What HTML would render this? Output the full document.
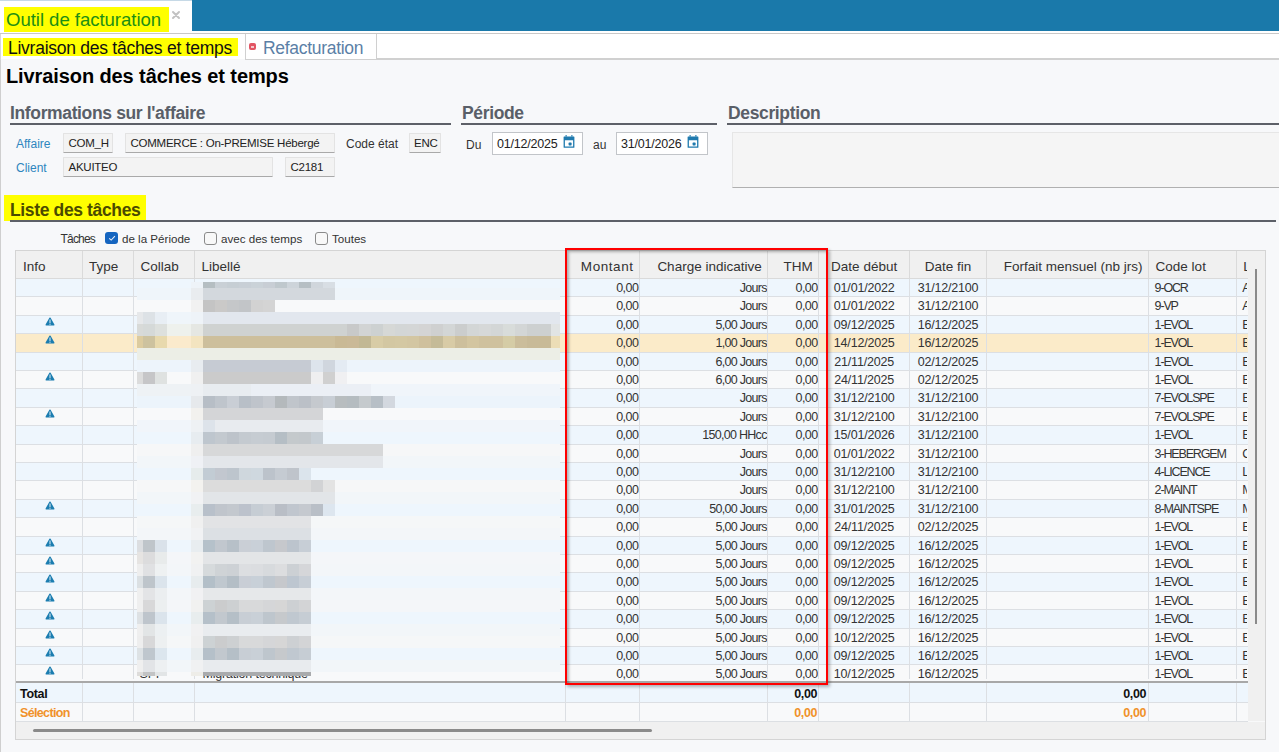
<!DOCTYPE html><html><head><meta charset="utf-8"><style>
*{box-sizing:border-box;margin:0;padding:0}
html,body{width:1279px;height:752px;overflow:hidden}
body{background:#f7f8fa;font-family:"Liberation Sans",sans-serif;color:#333;position:relative}
.a{position:absolute;white-space:nowrap}
.hl{background:#ffff00}
.sec{font-weight:bold;color:#5a5f68;font-size:17.5px;letter-spacing:-0.36px;line-height:20px}
.uline{position:absolute;height:2px;background:#5d6068}
.lbl{font-size:12px;color:#2e86be;line-height:16px}
.fld{position:absolute;background:#f3f3f3;border:1px solid #e3e3e3;border-bottom:1px solid #a9a9a9;border-radius:1px;font-size:11.5px;letter-spacing:-0.25px;color:#222;padding-left:4.5px;line-height:18px}
.date{position:absolute;background:#fff;border:1px solid #c2c5c9;font-size:12.5px;letter-spacing:-0.2px;color:#222;padding-left:4px;line-height:23px}
.txt{font-size:12px;color:#333;line-height:16px}
.cb{position:absolute;width:13px;height:13px;border:1px solid #8a8a8a;border-radius:3px;background:#f8f8f8}
.hdr{position:absolute;font-size:13.5px;color:#333;line-height:28px;white-space:nowrap;overflow:hidden}
.cell{position:absolute;font-size:12.5px;letter-spacing:-0.2px;color:#333;white-space:nowrap;overflow:hidden;line-height:18px}
</style></head><body>
<div class="a" style="left:0;top:0;width:1279px;height:33px;background:#fff"></div>
<div class="a" style="left:0;top:0;width:1279px;height:1px;background:#c6d9e6"></div>
<div class="a" style="left:192px;top:0;width:1087px;height:31px;background:#1a79aa"></div>
<div class="a hl" style="left:4px;top:7px;width:165px;height:25px"></div>
<div class="a" style="left:6px;top:7px;font-size:18.6px;line-height:25px;color:#1d8f14;letter-spacing:-0.05px">Outil de facturation</div>
<div class="a" style="left:171px;top:9.5px"><svg style="display:block" width="10" height="10" viewBox="0 0 10 10"><path d="M2 2 L8 8 M8 2 L2 8" stroke="#c2c2c2" stroke-width="2" stroke-linecap="round"/></svg></div>
<div class="a" style="left:0;top:33px;width:1279px;height:1px;background:#c8c8c8"></div>
<div class="a" style="left:0;top:34px;width:1279px;height:25px;background:#fff"></div>
<div class="a" style="left:245px;top:58px;width:1034px;height:1.5px;background:#d0d0d0"></div>
<div class="a" style="left:0;top:34px;width:1px;height:26px;background:#d8d8d8"></div>
<div class="a" style="left:245px;top:34px;width:132px;height:25.5px;border-right:1px solid #d0d0d0;border-left:1px solid #d0d0d0;border-bottom:1.5px solid #d0d0d0;background:#fff"></div>
<div class="a hl" style="left:3px;top:38px;width:235px;height:18px"></div>
<div class="a" style="left:8px;top:37px;font-size:17.5px;letter-spacing:-0.26px;line-height:22px;color:#111">Livraison des tâches et temps</div>
<div class="a" style="left:249px;top:43px;width:6.5px;height:7px;border-radius:2px;background:#e25564"></div>
<div class="a" style="left:250.5px;top:45.5px;width:3.5px;height:2px;background:#f4c8cc"></div>
<div class="a" style="left:263px;top:37px;font-size:17.5px;letter-spacing:-0.3px;line-height:22px;color:#5b7fa6">Refacturation</div>
<div class="a" style="left:0;top:60px;width:1px;height:692px;background:#cfcfcf"></div>
<div class="a" style="left:6px;top:64px;font-size:20px;line-height:24px;font-weight:bold;color:#000;letter-spacing:-0.1px">Livraison des tâches et temps</div>
<div class="a sec" style="left:10px;top:103px">Informations sur l'affaire</div>
<div class="uline" style="left:10px;top:122.6px;width:441px;height:2px"></div>
<div class="a sec" style="left:462px;top:103px">Période</div>
<div class="uline" style="left:461px;top:122.6px;width:256px;height:2px"></div>
<div class="a sec" style="left:728px;top:103px">Description</div>
<div class="uline" style="left:727px;top:122.6px;width:552px;height:2px"></div>
<div class="a lbl" style="left:16px;top:135.5px">Affaire</div>
<div class="a lbl" style="left:16px;top:159.5px">Client</div>
<div class="fld" style="left:63px;top:133px;width:50px;height:20px">COM_H</div>
<div class="fld" style="left:125px;top:133px;width:210px;height:20px">COMMERCE : On-PREMISE Hébergé</div>
<div class="fld" style="left:63px;top:157px;width:210px;height:20px">AKUITEO</div>
<div class="fld" style="left:285px;top:157px;width:50px;height:20px">C2181</div>
<div class="a txt" style="left:346px;top:136px">Code état</div>
<div class="fld" style="left:409px;top:133px;width:32px;height:20px;padding-left:4px">ENC</div>
<div class="a txt" style="left:466px;top:137px">Du</div>
<div class="date" style="left:492px;top:132px;width:91px;height:23px">01/12/2025</div>
<div class="a" style="left:563px;top:135px"><svg style="display:block" width="12" height="13" viewBox="0 0 12 13"><path d="M2.4 0.3 H3.9 V1.6 H2.4 Z M8.1 0.3 H9.6 V1.6 H8.1 Z" fill="#1f7aae"/><path d="M1.2 1.5 H10.8 Q11.4 1.5 11.4 2.1 V12.2 Q11.4 12.8 10.8 12.8 H1.2 Q0.6 12.8 0.6 12.2 V2.1 Q0.6 1.5 1.2 1.5 Z M1.9 5.3 V11.5 H10.1 V5.3 Z" fill="#1f7aae" fill-rule="evenodd"/><rect x="5.6" y="7.6" width="3" height="2.8" rx="0.6" fill="#1f7aae"/></svg></div>
<div class="a txt" style="left:593px;top:137px">au</div>
<div class="date" style="left:616px;top:132px;width:92px;height:23px">31/01/2026</div>
<div class="a" style="left:687px;top:135px"><svg style="display:block" width="12" height="13" viewBox="0 0 12 13"><path d="M2.4 0.3 H3.9 V1.6 H2.4 Z M8.1 0.3 H9.6 V1.6 H8.1 Z" fill="#1f7aae"/><path d="M1.2 1.5 H10.8 Q11.4 1.5 11.4 2.1 V12.2 Q11.4 12.8 10.8 12.8 H1.2 Q0.6 12.8 0.6 12.2 V2.1 Q0.6 1.5 1.2 1.5 Z M1.9 5.3 V11.5 H10.1 V5.3 Z" fill="#1f7aae" fill-rule="evenodd"/><rect x="5.6" y="7.6" width="3" height="2.8" rx="0.6" fill="#1f7aae"/></svg></div>
<div class="a" style="left:732px;top:132px;width:547px;height:56px;background:#f5f5f5;border-top:1px solid #e6e6e6;border-left:1px solid #e6e6e6;border-bottom:1px solid #b0b0b0"></div>
<div class="a hl" style="left:4px;top:195px;width:142px;height:26px"></div>
<div class="a sec" style="left:10px;top:200px;color:#4b4b00">Liste des tâches</div>
<div class="uline" style="left:10px;top:220px;width:1266px"></div>
<div class="a txt" style="left:60.5px;top:231px;letter-spacing:-0.8px">Tâches</div>
<div class="a" style="left:105px;top:231.5px;width:12.5px;height:12.5px;border-radius:3px;background:#1565c0"></div>
<div class="a" style="left:106.5px;top:233px"><svg style="display:block" width="10" height="10" viewBox="0 0 10 10"><path d="M2.2 5.3 L4.2 7.1 L7.9 3.2" stroke="#e6eef8" stroke-width="1.1" fill="none"/></svg></div>
<div class="a txt" style="left:122px;top:231px;font-size:11.6px">de la Période</div>
<div class="cb" style="left:204px;top:231.5px"></div>
<div class="a txt" style="left:221px;top:231px;font-size:11.6px">avec des temps</div>
<div class="cb" style="left:315px;top:231.5px"></div>
<div class="a txt" style="left:332px;top:231px;font-size:11.6px">Toutes</div>
<div class="a" style="left:15px;top:250px;width:1251px;height:490px;border:1px solid #d4d4d4;background:#f8f9fa"></div>
<div class="a" style="left:16px;top:251px;width:1232px;height:28px;background:#f0f0f0;border-bottom:1px solid #dadada"></div>
<div class="hdr" style="left:16.0px;top:252.8px;width:66.0px;padding-left:7px;text-align:left">Info</div>
<div class="hdr" style="left:82.0px;top:252.8px;width:51.5px;padding-left:7px;text-align:left">Type</div>
<div class="a" style="left:81.5px;top:251px;width:1px;height:27px;background:#dadada"></div>
<div class="hdr" style="left:133.5px;top:252.8px;width:61.0px;padding-left:7px;text-align:left">Collab</div>
<div class="a" style="left:133.0px;top:251px;width:1px;height:27px;background:#dadada"></div>
<div class="hdr" style="left:194.5px;top:252.8px;width:370.5px;padding-left:7px;text-align:left">Libellé</div>
<div class="a" style="left:194.0px;top:251px;width:1px;height:27px;background:#dadada"></div>
<div class="hdr" style="left:565.0px;top:252.8px;width:74.5px;padding-right:6px;text-align:right;letter-spacing:0.55px">Montant</div>
<div class="a" style="left:564.5px;top:251px;width:1px;height:27px;background:#dadada"></div>
<div class="hdr" style="left:639.5px;top:252.8px;width:128.2px;padding-right:6px;text-align:right">Charge indicative</div>
<div class="a" style="left:639.0px;top:251px;width:1px;height:27px;background:#dadada"></div>
<div class="hdr" style="left:767.7px;top:252.8px;width:51.1px;padding-right:6px;text-align:right">THM</div>
<div class="a" style="left:767.2px;top:251px;width:1px;height:27px;background:#dadada"></div>
<div class="hdr" style="left:818.8px;top:252.8px;width:90.7px;text-align:center">Date début</div>
<div class="a" style="left:818.3px;top:251px;width:1px;height:27px;background:#dadada"></div>
<div class="hdr" style="left:909.5px;top:252.8px;width:76.9px;text-align:center">Date fin</div>
<div class="a" style="left:909.0px;top:251px;width:1px;height:27px;background:#dadada"></div>
<div class="hdr" style="left:986.4px;top:252.8px;width:162.2px;padding-right:6px;text-align:right">Forfait mensuel (nb jrs)</div>
<div class="a" style="left:985.9px;top:251px;width:1px;height:27px;background:#dadada"></div>
<div class="hdr" style="left:1148.6px;top:252.8px;width:87.7px;padding-left:7px;text-align:left">Code lot</div>
<div class="a" style="left:1148.1px;top:251px;width:1px;height:27px;background:#dadada"></div>
<div class="hdr" style="left:1236.3px;top:252.8px;width:11.2px;padding-left:7px;text-align:left">L</div>
<div class="a" style="left:1235.8px;top:251px;width:1px;height:27px;background:#dadada"></div>
<div class="a" style="left:16px;top:279px;width:1232px;height:402px;overflow:hidden;background:#fff">
<div class="a" style="left:0;top:0.0px;width:1232px;height:18.4px;background:#eef6fd;border-bottom:1px solid #dcdfe3"></div>
<div class="cell" style="left:549.0px;top:0.0px;width:74.5px;text-align:right;padding-right:1px;letter-spacing:-0.5px">0,00</div>
<div class="cell" style="left:623.5px;top:0.0px;width:128.2px;text-align:right;padding-right:1px;letter-spacing:-0.72px">Jours</div>
<div class="cell" style="left:751.7px;top:0.0px;width:51.1px;text-align:right;padding-right:1px;letter-spacing:-0.5px">0,00</div>
<div class="cell" style="left:802.8px;top:0.0px;width:90.7px;text-align:center">01/01/2022</div>
<div class="cell" style="left:893.5px;top:0.0px;width:76.9px;text-align:center">31/12/2100</div>
<div class="cell" style="left:1132.6px;top:0.0px;width:87.7px;padding-left:6px;letter-spacing:-1.15px">9-OCR</div>
<div class="cell" style="left:1220.3px;top:0.0px;width:53.7px;padding-left:6px;width:11px">A</div>
<div class="a" style="left:0;top:18.4px;width:1232px;height:18.4px;background:#f8f9fa;border-bottom:1px solid #dcdfe3"></div>
<div class="cell" style="left:549.0px;top:18.4px;width:74.5px;text-align:right;padding-right:1px;letter-spacing:-0.5px">0,00</div>
<div class="cell" style="left:623.5px;top:18.4px;width:128.2px;text-align:right;padding-right:1px;letter-spacing:-0.72px">Jours</div>
<div class="cell" style="left:751.7px;top:18.4px;width:51.1px;text-align:right;padding-right:1px;letter-spacing:-0.5px">0,00</div>
<div class="cell" style="left:802.8px;top:18.4px;width:90.7px;text-align:center">01/01/2022</div>
<div class="cell" style="left:893.5px;top:18.4px;width:76.9px;text-align:center">31/12/2100</div>
<div class="cell" style="left:1132.6px;top:18.4px;width:87.7px;padding-left:6px;letter-spacing:-1.15px">9-VP</div>
<div class="cell" style="left:1220.3px;top:18.4px;width:53.7px;padding-left:6px;width:11px">A</div>
<div class="a" style="left:0;top:36.8px;width:1232px;height:18.4px;background:#eef6fd;border-bottom:1px solid #dcdfe3"></div>
<div class="a" style="left:29px;top:37.7px"><svg style="display:block" width="10" height="9" viewBox="0 0 10 9"><path d="M5 0.4 Q5.35 0.4 5.6 0.85 L9.4 7.5 Q9.8 8.4 8.9 8.4 L1.1 8.4 Q0.2 8.4 0.6 7.5 L4.4 0.85 Q4.65 0.4 5 0.4 Z" fill="#1b7db0"/><rect x="4.5" y="2.5" width="1" height="3.7" fill="#e6f0f6"/><rect x="4.5" y="6.8" width="1" height="1" fill="#e6f0f6"/></svg></div>
<div class="cell" style="left:549.0px;top:36.8px;width:74.5px;text-align:right;padding-right:1px;letter-spacing:-0.5px">0,00</div>
<div class="cell" style="left:623.5px;top:36.8px;width:128.2px;text-align:right;padding-right:1px;letter-spacing:-0.72px">5,00 Jours</div>
<div class="cell" style="left:751.7px;top:36.8px;width:51.1px;text-align:right;padding-right:1px;letter-spacing:-0.5px">0,00</div>
<div class="cell" style="left:802.8px;top:36.8px;width:90.7px;text-align:center">09/12/2025</div>
<div class="cell" style="left:893.5px;top:36.8px;width:76.9px;text-align:center">16/12/2025</div>
<div class="cell" style="left:1132.6px;top:36.8px;width:87.7px;padding-left:6px;letter-spacing:-1.15px">1-EVOL</div>
<div class="cell" style="left:1220.3px;top:36.8px;width:53.7px;padding-left:6px;width:11px">E</div>
<div class="a" style="left:0;top:55.2px;width:1232px;height:18.4px;background:#fbebc9;border-bottom:1px solid #dcdfe3"></div>
<div class="a" style="left:29px;top:56.1px"><svg style="display:block" width="10" height="9" viewBox="0 0 10 9"><path d="M5 0.4 Q5.35 0.4 5.6 0.85 L9.4 7.5 Q9.8 8.4 8.9 8.4 L1.1 8.4 Q0.2 8.4 0.6 7.5 L4.4 0.85 Q4.65 0.4 5 0.4 Z" fill="#1b7db0"/><rect x="4.5" y="2.5" width="1" height="3.7" fill="#e6f0f6"/><rect x="4.5" y="6.8" width="1" height="1" fill="#e6f0f6"/></svg></div>
<div class="cell" style="left:549.0px;top:55.2px;width:74.5px;text-align:right;padding-right:1px;letter-spacing:-0.5px">0,00</div>
<div class="cell" style="left:623.5px;top:55.2px;width:128.2px;text-align:right;padding-right:1px;letter-spacing:-0.72px">1,00 Jours</div>
<div class="cell" style="left:751.7px;top:55.2px;width:51.1px;text-align:right;padding-right:1px;letter-spacing:-0.5px">0,00</div>
<div class="cell" style="left:802.8px;top:55.2px;width:90.7px;text-align:center">14/12/2025</div>
<div class="cell" style="left:893.5px;top:55.2px;width:76.9px;text-align:center">16/12/2025</div>
<div class="cell" style="left:1132.6px;top:55.2px;width:87.7px;padding-left:6px;letter-spacing:-1.15px">1-EVOL</div>
<div class="cell" style="left:1220.3px;top:55.2px;width:53.7px;padding-left:6px;width:11px">E</div>
<div class="a" style="left:0;top:73.6px;width:1232px;height:18.4px;background:#eef6fd;border-bottom:1px solid #dcdfe3"></div>
<div class="cell" style="left:549.0px;top:73.6px;width:74.5px;text-align:right;padding-right:1px;letter-spacing:-0.5px">0,00</div>
<div class="cell" style="left:623.5px;top:73.6px;width:128.2px;text-align:right;padding-right:1px;letter-spacing:-0.72px">6,00 Jours</div>
<div class="cell" style="left:751.7px;top:73.6px;width:51.1px;text-align:right;padding-right:1px;letter-spacing:-0.5px">0,00</div>
<div class="cell" style="left:802.8px;top:73.6px;width:90.7px;text-align:center">21/11/2025</div>
<div class="cell" style="left:893.5px;top:73.6px;width:76.9px;text-align:center">02/12/2025</div>
<div class="cell" style="left:1132.6px;top:73.6px;width:87.7px;padding-left:6px;letter-spacing:-1.15px">1-EVOL</div>
<div class="cell" style="left:1220.3px;top:73.6px;width:53.7px;padding-left:6px;width:11px">E</div>
<div class="a" style="left:0;top:92.0px;width:1232px;height:18.4px;background:#f8f9fa;border-bottom:1px solid #dcdfe3"></div>
<div class="a" style="left:29px;top:92.9px"><svg style="display:block" width="10" height="9" viewBox="0 0 10 9"><path d="M5 0.4 Q5.35 0.4 5.6 0.85 L9.4 7.5 Q9.8 8.4 8.9 8.4 L1.1 8.4 Q0.2 8.4 0.6 7.5 L4.4 0.85 Q4.65 0.4 5 0.4 Z" fill="#1b7db0"/><rect x="4.5" y="2.5" width="1" height="3.7" fill="#e6f0f6"/><rect x="4.5" y="6.8" width="1" height="1" fill="#e6f0f6"/></svg></div>
<div class="cell" style="left:549.0px;top:92.0px;width:74.5px;text-align:right;padding-right:1px;letter-spacing:-0.5px">0,00</div>
<div class="cell" style="left:623.5px;top:92.0px;width:128.2px;text-align:right;padding-right:1px;letter-spacing:-0.72px">6,00 Jours</div>
<div class="cell" style="left:751.7px;top:92.0px;width:51.1px;text-align:right;padding-right:1px;letter-spacing:-0.5px">0,00</div>
<div class="cell" style="left:802.8px;top:92.0px;width:90.7px;text-align:center">24/11/2025</div>
<div class="cell" style="left:893.5px;top:92.0px;width:76.9px;text-align:center">02/12/2025</div>
<div class="cell" style="left:1132.6px;top:92.0px;width:87.7px;padding-left:6px;letter-spacing:-1.15px">1-EVOL</div>
<div class="cell" style="left:1220.3px;top:92.0px;width:53.7px;padding-left:6px;width:11px">E</div>
<div class="a" style="left:0;top:110.4px;width:1232px;height:18.4px;background:#eef6fd;border-bottom:1px solid #dcdfe3"></div>
<div class="cell" style="left:549.0px;top:110.4px;width:74.5px;text-align:right;padding-right:1px;letter-spacing:-0.5px">0,00</div>
<div class="cell" style="left:623.5px;top:110.4px;width:128.2px;text-align:right;padding-right:1px;letter-spacing:-0.72px">Jours</div>
<div class="cell" style="left:751.7px;top:110.4px;width:51.1px;text-align:right;padding-right:1px;letter-spacing:-0.5px">0,00</div>
<div class="cell" style="left:802.8px;top:110.4px;width:90.7px;text-align:center">31/12/2100</div>
<div class="cell" style="left:893.5px;top:110.4px;width:76.9px;text-align:center">31/12/2100</div>
<div class="cell" style="left:1132.6px;top:110.4px;width:87.7px;padding-left:6px;letter-spacing:-1.15px">7-EVOLSPE</div>
<div class="cell" style="left:1220.3px;top:110.4px;width:53.7px;padding-left:6px;width:11px">E</div>
<div class="a" style="left:0;top:128.8px;width:1232px;height:18.4px;background:#f8f9fa;border-bottom:1px solid #dcdfe3"></div>
<div class="a" style="left:29px;top:129.7px"><svg style="display:block" width="10" height="9" viewBox="0 0 10 9"><path d="M5 0.4 Q5.35 0.4 5.6 0.85 L9.4 7.5 Q9.8 8.4 8.9 8.4 L1.1 8.4 Q0.2 8.4 0.6 7.5 L4.4 0.85 Q4.65 0.4 5 0.4 Z" fill="#1b7db0"/><rect x="4.5" y="2.5" width="1" height="3.7" fill="#e6f0f6"/><rect x="4.5" y="6.8" width="1" height="1" fill="#e6f0f6"/></svg></div>
<div class="cell" style="left:549.0px;top:128.8px;width:74.5px;text-align:right;padding-right:1px;letter-spacing:-0.5px">0,00</div>
<div class="cell" style="left:623.5px;top:128.8px;width:128.2px;text-align:right;padding-right:1px;letter-spacing:-0.72px">Jours</div>
<div class="cell" style="left:751.7px;top:128.8px;width:51.1px;text-align:right;padding-right:1px;letter-spacing:-0.5px">0,00</div>
<div class="cell" style="left:802.8px;top:128.8px;width:90.7px;text-align:center">31/12/2100</div>
<div class="cell" style="left:893.5px;top:128.8px;width:76.9px;text-align:center">31/12/2100</div>
<div class="cell" style="left:1132.6px;top:128.8px;width:87.7px;padding-left:6px;letter-spacing:-1.15px">7-EVOLSPE</div>
<div class="cell" style="left:1220.3px;top:128.8px;width:53.7px;padding-left:6px;width:11px">E</div>
<div class="a" style="left:0;top:147.2px;width:1232px;height:18.4px;background:#eef6fd;border-bottom:1px solid #dcdfe3"></div>
<div class="cell" style="left:549.0px;top:147.2px;width:74.5px;text-align:right;padding-right:1px;letter-spacing:-0.5px">0,00</div>
<div class="cell" style="left:623.5px;top:147.2px;width:128.2px;text-align:right;padding-right:1px;letter-spacing:-0.72px">150,00 HHcc</div>
<div class="cell" style="left:751.7px;top:147.2px;width:51.1px;text-align:right;padding-right:1px;letter-spacing:-0.5px">0,00</div>
<div class="cell" style="left:802.8px;top:147.2px;width:90.7px;text-align:center">15/01/2026</div>
<div class="cell" style="left:893.5px;top:147.2px;width:76.9px;text-align:center">31/12/2100</div>
<div class="cell" style="left:1132.6px;top:147.2px;width:87.7px;padding-left:6px;letter-spacing:-1.15px">1-EVOL</div>
<div class="cell" style="left:1220.3px;top:147.2px;width:53.7px;padding-left:6px;width:11px">E</div>
<div class="a" style="left:0;top:165.6px;width:1232px;height:18.4px;background:#f8f9fa;border-bottom:1px solid #dcdfe3"></div>
<div class="cell" style="left:549.0px;top:165.6px;width:74.5px;text-align:right;padding-right:1px;letter-spacing:-0.5px">0,00</div>
<div class="cell" style="left:623.5px;top:165.6px;width:128.2px;text-align:right;padding-right:1px;letter-spacing:-0.72px">Jours</div>
<div class="cell" style="left:751.7px;top:165.6px;width:51.1px;text-align:right;padding-right:1px;letter-spacing:-0.5px">0,00</div>
<div class="cell" style="left:802.8px;top:165.6px;width:90.7px;text-align:center">01/01/2022</div>
<div class="cell" style="left:893.5px;top:165.6px;width:76.9px;text-align:center">31/12/2100</div>
<div class="cell" style="left:1132.6px;top:165.6px;width:87.7px;padding-left:6px;letter-spacing:-1.15px">3-HEBERGEM</div>
<div class="cell" style="left:1220.3px;top:165.6px;width:53.7px;padding-left:6px;width:11px">C</div>
<div class="a" style="left:0;top:184.0px;width:1232px;height:18.4px;background:#eef6fd;border-bottom:1px solid #dcdfe3"></div>
<div class="cell" style="left:549.0px;top:184.0px;width:74.5px;text-align:right;padding-right:1px;letter-spacing:-0.5px">0,00</div>
<div class="cell" style="left:623.5px;top:184.0px;width:128.2px;text-align:right;padding-right:1px;letter-spacing:-0.72px">Jours</div>
<div class="cell" style="left:751.7px;top:184.0px;width:51.1px;text-align:right;padding-right:1px;letter-spacing:-0.5px">0,00</div>
<div class="cell" style="left:802.8px;top:184.0px;width:90.7px;text-align:center">31/12/2100</div>
<div class="cell" style="left:893.5px;top:184.0px;width:76.9px;text-align:center">31/12/2100</div>
<div class="cell" style="left:1132.6px;top:184.0px;width:87.7px;padding-left:6px;letter-spacing:-1.15px">4-LICENCE</div>
<div class="cell" style="left:1220.3px;top:184.0px;width:53.7px;padding-left:6px;width:11px">L</div>
<div class="a" style="left:0;top:202.4px;width:1232px;height:18.4px;background:#f8f9fa;border-bottom:1px solid #dcdfe3"></div>
<div class="cell" style="left:549.0px;top:202.4px;width:74.5px;text-align:right;padding-right:1px;letter-spacing:-0.5px">0,00</div>
<div class="cell" style="left:623.5px;top:202.4px;width:128.2px;text-align:right;padding-right:1px;letter-spacing:-0.72px">Jours</div>
<div class="cell" style="left:751.7px;top:202.4px;width:51.1px;text-align:right;padding-right:1px;letter-spacing:-0.5px">0,00</div>
<div class="cell" style="left:802.8px;top:202.4px;width:90.7px;text-align:center">31/12/2100</div>
<div class="cell" style="left:893.5px;top:202.4px;width:76.9px;text-align:center">31/12/2100</div>
<div class="cell" style="left:1132.6px;top:202.4px;width:87.7px;padding-left:6px;letter-spacing:-1.15px">2-MAINT</div>
<div class="cell" style="left:1220.3px;top:202.4px;width:53.7px;padding-left:6px;width:11px">M</div>
<div class="a" style="left:0;top:220.8px;width:1232px;height:18.4px;background:#eef6fd;border-bottom:1px solid #dcdfe3"></div>
<div class="a" style="left:29px;top:221.7px"><svg style="display:block" width="10" height="9" viewBox="0 0 10 9"><path d="M5 0.4 Q5.35 0.4 5.6 0.85 L9.4 7.5 Q9.8 8.4 8.9 8.4 L1.1 8.4 Q0.2 8.4 0.6 7.5 L4.4 0.85 Q4.65 0.4 5 0.4 Z" fill="#1b7db0"/><rect x="4.5" y="2.5" width="1" height="3.7" fill="#e6f0f6"/><rect x="4.5" y="6.8" width="1" height="1" fill="#e6f0f6"/></svg></div>
<div class="cell" style="left:549.0px;top:220.8px;width:74.5px;text-align:right;padding-right:1px;letter-spacing:-0.5px">0,00</div>
<div class="cell" style="left:623.5px;top:220.8px;width:128.2px;text-align:right;padding-right:1px;letter-spacing:-0.72px">50,00 Jours</div>
<div class="cell" style="left:751.7px;top:220.8px;width:51.1px;text-align:right;padding-right:1px;letter-spacing:-0.5px">0,00</div>
<div class="cell" style="left:802.8px;top:220.8px;width:90.7px;text-align:center">31/01/2025</div>
<div class="cell" style="left:893.5px;top:220.8px;width:76.9px;text-align:center">31/12/2100</div>
<div class="cell" style="left:1132.6px;top:220.8px;width:87.7px;padding-left:6px;letter-spacing:-1.15px">8-MAINTSPE</div>
<div class="cell" style="left:1220.3px;top:220.8px;width:53.7px;padding-left:6px;width:11px">M</div>
<div class="a" style="left:0;top:239.2px;width:1232px;height:18.4px;background:#f8f9fa;border-bottom:1px solid #dcdfe3"></div>
<div class="cell" style="left:549.0px;top:239.2px;width:74.5px;text-align:right;padding-right:1px;letter-spacing:-0.5px">0,00</div>
<div class="cell" style="left:623.5px;top:239.2px;width:128.2px;text-align:right;padding-right:1px;letter-spacing:-0.72px">5,00 Jours</div>
<div class="cell" style="left:751.7px;top:239.2px;width:51.1px;text-align:right;padding-right:1px;letter-spacing:-0.5px">0,00</div>
<div class="cell" style="left:802.8px;top:239.2px;width:90.7px;text-align:center">24/11/2025</div>
<div class="cell" style="left:893.5px;top:239.2px;width:76.9px;text-align:center">02/12/2025</div>
<div class="cell" style="left:1132.6px;top:239.2px;width:87.7px;padding-left:6px;letter-spacing:-1.15px">1-EVOL</div>
<div class="cell" style="left:1220.3px;top:239.2px;width:53.7px;padding-left:6px;width:11px">E</div>
<div class="a" style="left:0;top:257.6px;width:1232px;height:18.4px;background:#eef6fd;border-bottom:1px solid #dcdfe3"></div>
<div class="a" style="left:29px;top:258.5px"><svg style="display:block" width="10" height="9" viewBox="0 0 10 9"><path d="M5 0.4 Q5.35 0.4 5.6 0.85 L9.4 7.5 Q9.8 8.4 8.9 8.4 L1.1 8.4 Q0.2 8.4 0.6 7.5 L4.4 0.85 Q4.65 0.4 5 0.4 Z" fill="#1b7db0"/><rect x="4.5" y="2.5" width="1" height="3.7" fill="#e6f0f6"/><rect x="4.5" y="6.8" width="1" height="1" fill="#e6f0f6"/></svg></div>
<div class="cell" style="left:549.0px;top:257.6px;width:74.5px;text-align:right;padding-right:1px;letter-spacing:-0.5px">0,00</div>
<div class="cell" style="left:623.5px;top:257.6px;width:128.2px;text-align:right;padding-right:1px;letter-spacing:-0.72px">5,00 Jours</div>
<div class="cell" style="left:751.7px;top:257.6px;width:51.1px;text-align:right;padding-right:1px;letter-spacing:-0.5px">0,00</div>
<div class="cell" style="left:802.8px;top:257.6px;width:90.7px;text-align:center">09/12/2025</div>
<div class="cell" style="left:893.5px;top:257.6px;width:76.9px;text-align:center">16/12/2025</div>
<div class="cell" style="left:1132.6px;top:257.6px;width:87.7px;padding-left:6px;letter-spacing:-1.15px">1-EVOL</div>
<div class="cell" style="left:1220.3px;top:257.6px;width:53.7px;padding-left:6px;width:11px">E</div>
<div class="a" style="left:0;top:276.0px;width:1232px;height:18.4px;background:#f8f9fa;border-bottom:1px solid #dcdfe3"></div>
<div class="a" style="left:29px;top:276.9px"><svg style="display:block" width="10" height="9" viewBox="0 0 10 9"><path d="M5 0.4 Q5.35 0.4 5.6 0.85 L9.4 7.5 Q9.8 8.4 8.9 8.4 L1.1 8.4 Q0.2 8.4 0.6 7.5 L4.4 0.85 Q4.65 0.4 5 0.4 Z" fill="#1b7db0"/><rect x="4.5" y="2.5" width="1" height="3.7" fill="#e6f0f6"/><rect x="4.5" y="6.8" width="1" height="1" fill="#e6f0f6"/></svg></div>
<div class="cell" style="left:549.0px;top:276.0px;width:74.5px;text-align:right;padding-right:1px;letter-spacing:-0.5px">0,00</div>
<div class="cell" style="left:623.5px;top:276.0px;width:128.2px;text-align:right;padding-right:1px;letter-spacing:-0.72px">5,00 Jours</div>
<div class="cell" style="left:751.7px;top:276.0px;width:51.1px;text-align:right;padding-right:1px;letter-spacing:-0.5px">0,00</div>
<div class="cell" style="left:802.8px;top:276.0px;width:90.7px;text-align:center">09/12/2025</div>
<div class="cell" style="left:893.5px;top:276.0px;width:76.9px;text-align:center">16/12/2025</div>
<div class="cell" style="left:1132.6px;top:276.0px;width:87.7px;padding-left:6px;letter-spacing:-1.15px">1-EVOL</div>
<div class="cell" style="left:1220.3px;top:276.0px;width:53.7px;padding-left:6px;width:11px">E</div>
<div class="a" style="left:0;top:294.4px;width:1232px;height:18.4px;background:#eef6fd;border-bottom:1px solid #dcdfe3"></div>
<div class="a" style="left:29px;top:295.3px"><svg style="display:block" width="10" height="9" viewBox="0 0 10 9"><path d="M5 0.4 Q5.35 0.4 5.6 0.85 L9.4 7.5 Q9.8 8.4 8.9 8.4 L1.1 8.4 Q0.2 8.4 0.6 7.5 L4.4 0.85 Q4.65 0.4 5 0.4 Z" fill="#1b7db0"/><rect x="4.5" y="2.5" width="1" height="3.7" fill="#e6f0f6"/><rect x="4.5" y="6.8" width="1" height="1" fill="#e6f0f6"/></svg></div>
<div class="cell" style="left:549.0px;top:294.4px;width:74.5px;text-align:right;padding-right:1px;letter-spacing:-0.5px">0,00</div>
<div class="cell" style="left:623.5px;top:294.4px;width:128.2px;text-align:right;padding-right:1px;letter-spacing:-0.72px">5,00 Jours</div>
<div class="cell" style="left:751.7px;top:294.4px;width:51.1px;text-align:right;padding-right:1px;letter-spacing:-0.5px">0,00</div>
<div class="cell" style="left:802.8px;top:294.4px;width:90.7px;text-align:center">09/12/2025</div>
<div class="cell" style="left:893.5px;top:294.4px;width:76.9px;text-align:center">16/12/2025</div>
<div class="cell" style="left:1132.6px;top:294.4px;width:87.7px;padding-left:6px;letter-spacing:-1.15px">1-EVOL</div>
<div class="cell" style="left:1220.3px;top:294.4px;width:53.7px;padding-left:6px;width:11px">E</div>
<div class="a" style="left:0;top:312.8px;width:1232px;height:18.4px;background:#f8f9fa;border-bottom:1px solid #dcdfe3"></div>
<div class="a" style="left:29px;top:313.7px"><svg style="display:block" width="10" height="9" viewBox="0 0 10 9"><path d="M5 0.4 Q5.35 0.4 5.6 0.85 L9.4 7.5 Q9.8 8.4 8.9 8.4 L1.1 8.4 Q0.2 8.4 0.6 7.5 L4.4 0.85 Q4.65 0.4 5 0.4 Z" fill="#1b7db0"/><rect x="4.5" y="2.5" width="1" height="3.7" fill="#e6f0f6"/><rect x="4.5" y="6.8" width="1" height="1" fill="#e6f0f6"/></svg></div>
<div class="cell" style="left:549.0px;top:312.8px;width:74.5px;text-align:right;padding-right:1px;letter-spacing:-0.5px">0,00</div>
<div class="cell" style="left:623.5px;top:312.8px;width:128.2px;text-align:right;padding-right:1px;letter-spacing:-0.72px">5,00 Jours</div>
<div class="cell" style="left:751.7px;top:312.8px;width:51.1px;text-align:right;padding-right:1px;letter-spacing:-0.5px">0,00</div>
<div class="cell" style="left:802.8px;top:312.8px;width:90.7px;text-align:center">09/12/2025</div>
<div class="cell" style="left:893.5px;top:312.8px;width:76.9px;text-align:center">16/12/2025</div>
<div class="cell" style="left:1132.6px;top:312.8px;width:87.7px;padding-left:6px;letter-spacing:-1.15px">1-EVOL</div>
<div class="cell" style="left:1220.3px;top:312.8px;width:53.7px;padding-left:6px;width:11px">E</div>
<div class="a" style="left:0;top:331.2px;width:1232px;height:18.4px;background:#eef6fd;border-bottom:1px solid #dcdfe3"></div>
<div class="a" style="left:29px;top:332.1px"><svg style="display:block" width="10" height="9" viewBox="0 0 10 9"><path d="M5 0.4 Q5.35 0.4 5.6 0.85 L9.4 7.5 Q9.8 8.4 8.9 8.4 L1.1 8.4 Q0.2 8.4 0.6 7.5 L4.4 0.85 Q4.65 0.4 5 0.4 Z" fill="#1b7db0"/><rect x="4.5" y="2.5" width="1" height="3.7" fill="#e6f0f6"/><rect x="4.5" y="6.8" width="1" height="1" fill="#e6f0f6"/></svg></div>
<div class="cell" style="left:549.0px;top:331.2px;width:74.5px;text-align:right;padding-right:1px;letter-spacing:-0.5px">0,00</div>
<div class="cell" style="left:623.5px;top:331.2px;width:128.2px;text-align:right;padding-right:1px;letter-spacing:-0.72px">5,00 Jours</div>
<div class="cell" style="left:751.7px;top:331.2px;width:51.1px;text-align:right;padding-right:1px;letter-spacing:-0.5px">0,00</div>
<div class="cell" style="left:802.8px;top:331.2px;width:90.7px;text-align:center">09/12/2025</div>
<div class="cell" style="left:893.5px;top:331.2px;width:76.9px;text-align:center">16/12/2025</div>
<div class="cell" style="left:1132.6px;top:331.2px;width:87.7px;padding-left:6px;letter-spacing:-1.15px">1-EVOL</div>
<div class="cell" style="left:1220.3px;top:331.2px;width:53.7px;padding-left:6px;width:11px">E</div>
<div class="a" style="left:0;top:349.6px;width:1232px;height:18.4px;background:#f8f9fa;border-bottom:1px solid #dcdfe3"></div>
<div class="a" style="left:29px;top:350.5px"><svg style="display:block" width="10" height="9" viewBox="0 0 10 9"><path d="M5 0.4 Q5.35 0.4 5.6 0.85 L9.4 7.5 Q9.8 8.4 8.9 8.4 L1.1 8.4 Q0.2 8.4 0.6 7.5 L4.4 0.85 Q4.65 0.4 5 0.4 Z" fill="#1b7db0"/><rect x="4.5" y="2.5" width="1" height="3.7" fill="#e6f0f6"/><rect x="4.5" y="6.8" width="1" height="1" fill="#e6f0f6"/></svg></div>
<div class="cell" style="left:549.0px;top:349.6px;width:74.5px;text-align:right;padding-right:1px;letter-spacing:-0.5px">0,00</div>
<div class="cell" style="left:623.5px;top:349.6px;width:128.2px;text-align:right;padding-right:1px;letter-spacing:-0.72px">5,00 Jours</div>
<div class="cell" style="left:751.7px;top:349.6px;width:51.1px;text-align:right;padding-right:1px;letter-spacing:-0.5px">0,00</div>
<div class="cell" style="left:802.8px;top:349.6px;width:90.7px;text-align:center">10/12/2025</div>
<div class="cell" style="left:893.5px;top:349.6px;width:76.9px;text-align:center">16/12/2025</div>
<div class="cell" style="left:1132.6px;top:349.6px;width:87.7px;padding-left:6px;letter-spacing:-1.15px">1-EVOL</div>
<div class="cell" style="left:1220.3px;top:349.6px;width:53.7px;padding-left:6px;width:11px">E</div>
<div class="a" style="left:0;top:368.0px;width:1232px;height:18.4px;background:#eef6fd;border-bottom:1px solid #dcdfe3"></div>
<div class="a" style="left:29px;top:368.9px"><svg style="display:block" width="10" height="9" viewBox="0 0 10 9"><path d="M5 0.4 Q5.35 0.4 5.6 0.85 L9.4 7.5 Q9.8 8.4 8.9 8.4 L1.1 8.4 Q0.2 8.4 0.6 7.5 L4.4 0.85 Q4.65 0.4 5 0.4 Z" fill="#1b7db0"/><rect x="4.5" y="2.5" width="1" height="3.7" fill="#e6f0f6"/><rect x="4.5" y="6.8" width="1" height="1" fill="#e6f0f6"/></svg></div>
<div class="cell" style="left:549.0px;top:368.0px;width:74.5px;text-align:right;padding-right:1px;letter-spacing:-0.5px">0,00</div>
<div class="cell" style="left:623.5px;top:368.0px;width:128.2px;text-align:right;padding-right:1px;letter-spacing:-0.72px">5,00 Jours</div>
<div class="cell" style="left:751.7px;top:368.0px;width:51.1px;text-align:right;padding-right:1px;letter-spacing:-0.5px">0,00</div>
<div class="cell" style="left:802.8px;top:368.0px;width:90.7px;text-align:center">09/12/2025</div>
<div class="cell" style="left:893.5px;top:368.0px;width:76.9px;text-align:center">16/12/2025</div>
<div class="cell" style="left:1132.6px;top:368.0px;width:87.7px;padding-left:6px;letter-spacing:-1.15px">1-EVOL</div>
<div class="cell" style="left:1220.3px;top:368.0px;width:53.7px;padding-left:6px;width:11px">E</div>
<div class="a" style="left:0;top:386.4px;width:1232px;height:18.4px;background:#f8f9fa;border-bottom:1px solid #dcdfe3"></div>
<div class="a" style="left:29px;top:387.3px"><svg style="display:block" width="10" height="9" viewBox="0 0 10 9"><path d="M5 0.4 Q5.35 0.4 5.6 0.85 L9.4 7.5 Q9.8 8.4 8.9 8.4 L1.1 8.4 Q0.2 8.4 0.6 7.5 L4.4 0.85 Q4.65 0.4 5 0.4 Z" fill="#1b7db0"/><rect x="4.5" y="2.5" width="1" height="3.7" fill="#e6f0f6"/><rect x="4.5" y="6.8" width="1" height="1" fill="#e6f0f6"/></svg></div>
<div class="cell" style="left:549.0px;top:386.4px;width:74.5px;text-align:right;padding-right:1px;letter-spacing:-0.5px">0,00</div>
<div class="cell" style="left:623.5px;top:386.4px;width:128.2px;text-align:right;padding-right:1px;letter-spacing:-0.72px">5,00 Jours</div>
<div class="cell" style="left:751.7px;top:386.4px;width:51.1px;text-align:right;padding-right:1px;letter-spacing:-0.5px">0,00</div>
<div class="cell" style="left:802.8px;top:386.4px;width:90.7px;text-align:center">10/12/2025</div>
<div class="cell" style="left:893.5px;top:386.4px;width:76.9px;text-align:center">16/12/2025</div>
<div class="cell" style="left:1132.6px;top:386.4px;width:87.7px;padding-left:6px;letter-spacing:-1.15px">1-EVOL</div>
<div class="cell" style="left:1220.3px;top:386.4px;width:53.7px;padding-left:6px;width:11px">E</div>
<div class="cell" style="left:117.5px;top:386.4px;width:61.0px;padding-left:6px">SPI</div>
<div class="cell" style="left:178.5px;top:386.4px;width:370.5px;padding-left:6px;padding-left:8px">Migration technique</div>
<div class="a" style="left:65.5px;top:0;width:1px;height:400px;background:#dcdfe3"></div>
<div class="a" style="left:117.0px;top:0;width:1px;height:400px;background:#dcdfe3"></div>
<div class="a" style="left:178.0px;top:0;width:1px;height:400px;background:#dcdfe3"></div>
<div class="a" style="left:548.5px;top:0;width:1px;height:400px;background:#dcdfe3"></div>
<div class="a" style="left:623.0px;top:0;width:1px;height:400px;background:#dcdfe3"></div>
<div class="a" style="left:751.2px;top:0;width:1px;height:400px;background:#dcdfe3"></div>
<div class="a" style="left:802.3px;top:0;width:1px;height:400px;background:#dcdfe3"></div>
<div class="a" style="left:893.0px;top:0;width:1px;height:400px;background:#dcdfe3"></div>
<div class="a" style="left:969.9px;top:0;width:1px;height:400px;background:#dcdfe3"></div>
<div class="a" style="left:1132.1px;top:0;width:1px;height:400px;background:#dcdfe3"></div>
<div class="a" style="left:1219.8px;top:0;width:1px;height:400px;background:#dcdfe3"></div>
</div>
<svg class="a" style="left:137px;top:282px" width="423" height="394" viewBox="137 282 423 394" shape-rendering="crispEdges"><rect x="137" y="282" width="423" height="6" fill="#eef6fd"/><rect x="191" y="282" width="12" height="6" fill="#eef3f8"/><rect x="203" y="282" width="132" height="6" fill="#c8cfd5"/><rect x="137" y="288" width="423" height="12" fill="#eff5fa"/><rect x="191" y="288" width="12" height="12" fill="#e9ecef"/><rect x="203" y="288" width="132" height="12" fill="#d3d8dd"/><rect x="137" y="300" width="423" height="12" fill="#f8f9fa"/><rect x="191" y="300" width="12" height="12" fill="#f1f1f1"/><rect x="203" y="300" width="72" height="12" fill="#c9cacb"/><rect x="137" y="312" width="423" height="12" fill="#eff5fa"/><rect x="137" y="312" width="6" height="12" fill="#e6e8ea"/><rect x="143" y="312" width="12" height="12" fill="#dde2e6"/><rect x="155" y="312" width="12" height="12" fill="#e8eef4"/><rect x="191" y="312" width="12" height="12" fill="#eef3f8"/><rect x="203" y="312" width="357" height="12" fill="#e2e7ee"/><rect x="137" y="324" width="423" height="12" fill="#eff2f2"/><rect x="137" y="324" width="6" height="12" fill="#d8dad8"/><rect x="143" y="324" width="12" height="12" fill="#d5d9d8"/><rect x="155" y="324" width="12" height="12" fill="#dde0dd"/><rect x="167" y="324" width="24" height="12" fill="#eef1ed"/><rect x="191" y="324" width="12" height="12" fill="#e5e7e3"/><rect x="203" y="324" width="348" height="12" fill="#cfd2d1"/><rect x="551" y="324" width="9" height="12" fill="#e1e4e4"/><rect x="137" y="336" width="423" height="12" fill="#fbebc9"/><rect x="137" y="336" width="6" height="12" fill="#dccb9f"/><rect x="143" y="336" width="12" height="12" fill="#cdc29f"/><rect x="155" y="336" width="12" height="12" fill="#e8d9ad"/><rect x="167" y="336" width="24" height="12" fill="#fbeacc"/><rect x="191" y="336" width="12" height="12" fill="#f3e4c0"/><rect x="203" y="336" width="348" height="12" fill="#cdbf9c"/><rect x="551" y="336" width="9" height="12" fill="#ecddb6"/><rect x="137" y="348" width="423" height="12" fill="#f1f0ea"/><rect x="137" y="348" width="423" height="12" fill="#eceee6"/><rect x="137" y="360" width="423" height="12" fill="#edf4fb"/><rect x="191" y="360" width="12" height="12" fill="#e8ecf0"/><rect x="203" y="360" width="108" height="12" fill="#c6cbd3"/><rect x="311" y="360" width="12" height="12" fill="#dde4ec"/><rect x="323" y="360" width="12" height="12" fill="#d0d6de"/><rect x="335" y="360" width="12" height="12" fill="#e4ebf3"/><rect x="137" y="372" width="423" height="12" fill="#f8f9fa"/><rect x="137" y="372" width="6" height="12" fill="#dcdcdc"/><rect x="143" y="372" width="12" height="12" fill="#c6c6c8"/><rect x="155" y="372" width="12" height="12" fill="#dfe2e1"/><rect x="191" y="372" width="12" height="12" fill="#f0f0f0"/><rect x="203" y="372" width="108" height="12" fill="#cbcbcb"/><rect x="311" y="372" width="12" height="12" fill="#efeff0"/><rect x="323" y="372" width="12" height="12" fill="#d0d0d0"/><rect x="335" y="372" width="12" height="12" fill="#f0f0f2"/><rect x="137" y="384" width="423" height="12" fill="#f0f5fa"/><rect x="137" y="384" width="54" height="12" fill="#eef2f5"/><rect x="191" y="384" width="12" height="12" fill="#eef1f4"/><rect x="203" y="384" width="48" height="12" fill="#e8ecf0"/><rect x="251" y="384" width="120" height="12" fill="#ebeff5"/><rect x="137" y="396" width="423" height="12" fill="#ecf4fb"/><rect x="191" y="396" width="12" height="12" fill="#e6e9ec"/><rect x="203" y="396" width="180" height="12" fill="#bdc3ca"/><rect x="383" y="396" width="12" height="12" fill="#d3d8df"/><rect x="137" y="408" width="423" height="12" fill="#f8f9fa"/><rect x="191" y="408" width="12" height="12" fill="#f2f1ee"/><rect x="203" y="408" width="120" height="12" fill="#d4d5d7"/><rect x="137" y="420" width="423" height="12" fill="#f1f5fa"/><rect x="191" y="420" width="12" height="12" fill="#eef1f4"/><rect x="203" y="420" width="12" height="12" fill="#dde3ea"/><rect x="215" y="420" width="108" height="12" fill="#e8ebef"/><rect x="137" y="432" width="423" height="12" fill="#eef6fd"/><rect x="191" y="432" width="12" height="12" fill="#e7ecf0"/><rect x="203" y="432" width="120" height="12" fill="#c2c9d0"/><rect x="137" y="444" width="423" height="12" fill="#f6f7f8"/><rect x="191" y="444" width="12" height="12" fill="#efefef"/><rect x="203" y="444" width="180" height="12" fill="#d7d8d9"/><rect x="137" y="456" width="423" height="12" fill="#f2f6f9"/><rect x="191" y="456" width="12" height="12" fill="#eff1f5"/><rect x="203" y="456" width="180" height="12" fill="#e3e6ea"/><rect x="137" y="468" width="423" height="12" fill="#eef6fd"/><rect x="191" y="468" width="12" height="12" fill="#e6ecec"/><rect x="203" y="468" width="96" height="12" fill="#c3cad2"/><rect x="299" y="468" width="12" height="12" fill="#dbe4ec"/><rect x="137" y="480" width="423" height="12" fill="#f6f7f8"/><rect x="191" y="480" width="12" height="12" fill="#f3f2ef"/><rect x="203" y="480" width="108" height="12" fill="#dcdcdc"/><rect x="311" y="480" width="12" height="12" fill="#d2d3d5"/><rect x="323" y="480" width="12" height="12" fill="#e3e3e3"/><rect x="137" y="492" width="423" height="12" fill="#f2f6f9"/><rect x="191" y="492" width="12" height="12" fill="#f1f2f4"/><rect x="203" y="492" width="132" height="12" fill="#e2e5e8"/><rect x="137" y="504" width="423" height="12" fill="#eef6fd"/><rect x="191" y="504" width="12" height="12" fill="#e8edee"/><rect x="203" y="504" width="120" height="12" fill="#bec4cc"/><rect x="323" y="504" width="12" height="12" fill="#dde6ef"/><rect x="137" y="516" width="423" height="12" fill="#f5f7f8"/><rect x="191" y="516" width="12" height="12" fill="#f0f0f0"/><rect x="203" y="516" width="108" height="12" fill="#e2e3e5"/><rect x="137" y="528" width="423" height="12" fill="#f3f6f9"/><rect x="191" y="528" width="12" height="12" fill="#f1f2f4"/><rect x="203" y="528" width="108" height="12" fill="#dce0e4"/><rect x="137" y="540" width="423" height="12" fill="#eef6fd"/><rect x="137" y="540" width="6" height="12" fill="#dcdee1"/><rect x="143" y="540" width="12" height="12" fill="#bfc5ca"/><rect x="155" y="540" width="12" height="12" fill="#dae2ea"/><rect x="191" y="540" width="12" height="12" fill="#e8edf0"/><rect x="203" y="540" width="108" height="12" fill="#c0c7cf"/><rect x="137" y="552" width="423" height="12" fill="#f4f6f9"/><rect x="137" y="552" width="6" height="12" fill="#e6e4e2"/><rect x="143" y="552" width="12" height="12" fill="#dcdcdd"/><rect x="155" y="552" width="12" height="12" fill="#e8ebeb"/><rect x="191" y="552" width="12" height="12" fill="#f2f2f1"/><rect x="203" y="552" width="108" height="12" fill="#e3e5e7"/><rect x="137" y="564" width="423" height="12" fill="#f3f6f9"/><rect x="137" y="564" width="6" height="12" fill="#eeeeee"/><rect x="143" y="564" width="12" height="12" fill="#e0e1e3"/><rect x="155" y="564" width="12" height="12" fill="#eef1f2"/><rect x="191" y="564" width="12" height="12" fill="#f0f1f2"/><rect x="203" y="564" width="108" height="12" fill="#d5d8da"/><rect x="137" y="576" width="423" height="12" fill="#eef6fd"/><rect x="137" y="576" width="6" height="12" fill="#dbe0e3"/><rect x="143" y="576" width="12" height="12" fill="#bec5cb"/><rect x="155" y="576" width="12" height="12" fill="#dbe4ec"/><rect x="191" y="576" width="12" height="12" fill="#e7ecee"/><rect x="203" y="576" width="108" height="12" fill="#c1c8d0"/><rect x="137" y="588" width="423" height="12" fill="#f3f6f9"/><rect x="137" y="588" width="6" height="12" fill="#efefef"/><rect x="143" y="588" width="12" height="12" fill="#e3e4e6"/><rect x="155" y="588" width="12" height="12" fill="#ebeef0"/><rect x="191" y="588" width="12" height="12" fill="#f1f1f3"/><rect x="203" y="588" width="108" height="12" fill="#e6e8ea"/><rect x="137" y="600" width="423" height="12" fill="#f4f6f9"/><rect x="137" y="600" width="6" height="12" fill="#efefef"/><rect x="143" y="600" width="12" height="12" fill="#d8d8d9"/><rect x="155" y="600" width="12" height="12" fill="#eceff0"/><rect x="191" y="600" width="12" height="12" fill="#f1f1f0"/><rect x="203" y="600" width="108" height="12" fill="#d3d5d7"/><rect x="137" y="612" width="423" height="12" fill="#eef6fd"/><rect x="137" y="612" width="6" height="12" fill="#dde1e4"/><rect x="143" y="612" width="12" height="12" fill="#bec5cc"/><rect x="155" y="612" width="12" height="12" fill="#dbe4ec"/><rect x="191" y="612" width="12" height="12" fill="#e8edee"/><rect x="203" y="612" width="108" height="12" fill="#c2c9d1"/><rect x="137" y="624" width="423" height="12" fill="#f2f6f9"/><rect x="137" y="624" width="6" height="12" fill="#efefef"/><rect x="143" y="624" width="12" height="12" fill="#e2e5e6"/><rect x="155" y="624" width="12" height="12" fill="#ecf0f2"/><rect x="191" y="624" width="12" height="12" fill="#f1f1f2"/><rect x="203" y="624" width="108" height="12" fill="#e9ecef"/><rect x="137" y="636" width="423" height="12" fill="#f5f7f8"/><rect x="137" y="636" width="6" height="12" fill="#eeeeee"/><rect x="143" y="636" width="12" height="12" fill="#d8d8d9"/><rect x="155" y="636" width="12" height="12" fill="#edf0f1"/><rect x="191" y="636" width="12" height="12" fill="#f0f0f0"/><rect x="203" y="636" width="108" height="12" fill="#d0d2d4"/><rect x="137" y="648" width="423" height="12" fill="#eef6fd"/><rect x="137" y="648" width="6" height="12" fill="#dde2e5"/><rect x="143" y="648" width="12" height="12" fill="#bfc7ce"/><rect x="155" y="648" width="12" height="12" fill="#dce6ee"/><rect x="191" y="648" width="12" height="12" fill="#e8edef"/><rect x="203" y="648" width="108" height="12" fill="#c2cad2"/><rect x="137" y="660" width="423" height="12" fill="#f2f6f9"/><rect x="137" y="660" width="6" height="12" fill="#efefef"/><rect x="143" y="660" width="12" height="12" fill="#e2e4e7"/><rect x="155" y="660" width="12" height="12" fill="#edf0f2"/><rect x="191" y="660" width="12" height="12" fill="#f0f1f2"/><rect x="203" y="660" width="108" height="12" fill="#e8ebee"/><rect x="137" y="672" width="423" height="4" fill="#f8f9fa"/><rect x="137" y="672" width="6" height="4" fill="#dddcda"/><rect x="143" y="672" width="12" height="4" fill="#c2c3c4"/><rect x="155" y="672" width="12" height="4" fill="#e2e5e6"/><rect x="191" y="672" width="12" height="4" fill="#eeede8"/><rect x="203" y="672" width="108" height="4" fill="#a9abad"/><rect x="203" y="282" width="12" height="6" fill="#b5bec2"/><rect x="215" y="282" width="12" height="6" fill="#c9d0d6"/><rect x="227" y="282" width="12" height="6" fill="#c6ced4"/><rect x="239" y="282" width="12" height="6" fill="#c8cfd6"/><rect x="251" y="282" width="12" height="6" fill="#cad2d8"/><rect x="263" y="282" width="12" height="6" fill="#c8ced5"/><rect x="275" y="282" width="12" height="6" fill="#bfc8cd"/><rect x="287" y="282" width="12" height="6" fill="#cdd4da"/><rect x="299" y="282" width="12" height="6" fill="#b6bfc4"/><rect x="311" y="282" width="12" height="6" fill="#d0d6dc"/><rect x="323" y="282" width="12" height="6" fill="#d8dee4"/><rect x="203" y="300" width="12" height="12" fill="#c4c4c4"/><rect x="215" y="300" width="12" height="12" fill="#cac9c8"/><rect x="227" y="300" width="12" height="12" fill="#c5c7c9"/><rect x="239" y="300" width="12" height="12" fill="#c2c5c8"/><rect x="251" y="300" width="12" height="12" fill="#d2d2d2"/><rect x="263" y="300" width="12" height="12" fill="#d4d4d4"/><rect x="347" y="324" width="12" height="12" fill="#c8c9c9"/><rect x="359" y="324" width="12" height="12" fill="#d2d4d4"/><rect x="371" y="324" width="12" height="12" fill="#cdd1d1"/><rect x="383" y="324" width="12" height="12" fill="#d6d8d6"/><rect x="395" y="324" width="12" height="12" fill="#d3d6d6"/><rect x="407" y="324" width="12" height="12" fill="#d4d6d6"/><rect x="419" y="324" width="12" height="12" fill="#d4d4d4"/><rect x="431" y="324" width="12" height="12" fill="#cfd0d0"/><rect x="443" y="324" width="12" height="12" fill="#d3d6d6"/><rect x="455" y="324" width="12" height="12" fill="#cbcdcd"/><rect x="467" y="324" width="12" height="12" fill="#d3d6d6"/><rect x="479" y="324" width="12" height="12" fill="#d6d8d8"/><rect x="491" y="324" width="12" height="12" fill="#d3d6d6"/><rect x="503" y="324" width="12" height="12" fill="#d8dcda"/><rect x="515" y="324" width="12" height="12" fill="#d3d6d6"/><rect x="527" y="324" width="12" height="12" fill="#cdd0d0"/><rect x="539" y="324" width="12" height="12" fill="#cdd0d0"/><rect x="335" y="336" width="12" height="12" fill="#c9b995"/><rect x="347" y="336" width="12" height="12" fill="#cab997"/><rect x="359" y="336" width="12" height="12" fill="#c2b894"/><rect x="371" y="336" width="12" height="12" fill="#d8cca6"/><rect x="383" y="336" width="12" height="12" fill="#d3c7a2"/><rect x="395" y="336" width="12" height="12" fill="#d4c8a3"/><rect x="407" y="336" width="12" height="12" fill="#d3c6a2"/><rect x="419" y="336" width="12" height="12" fill="#cfc09d"/><rect x="431" y="336" width="12" height="12" fill="#c5bb98"/><rect x="443" y="336" width="12" height="12" fill="#d8cba6"/><rect x="455" y="336" width="12" height="12" fill="#cdbf9c"/><rect x="467" y="336" width="12" height="12" fill="#d3c5a0"/><rect x="479" y="336" width="12" height="12" fill="#cfc19e"/><rect x="491" y="336" width="12" height="12" fill="#cfc19e"/><rect x="503" y="336" width="12" height="12" fill="#d5cca6"/><rect x="515" y="336" width="12" height="12" fill="#cbbd9b"/><rect x="527" y="336" width="12" height="12" fill="#c8ba98"/><rect x="539" y="336" width="12" height="12" fill="#c8ba97"/><rect x="203" y="396" width="12" height="12" fill="#b7bec6"/><rect x="215" y="396" width="12" height="12" fill="#bfc5cc"/><rect x="227" y="396" width="12" height="12" fill="#c9ced5"/><rect x="239" y="396" width="12" height="12" fill="#b8bfc7"/><rect x="251" y="396" width="12" height="12" fill="#bfc4cb"/><rect x="263" y="396" width="12" height="12" fill="#c6cad0"/><rect x="275" y="396" width="12" height="12" fill="#b4b9bc"/><rect x="287" y="396" width="12" height="12" fill="#c0c5cb"/><rect x="299" y="396" width="12" height="12" fill="#bbc0c7"/><rect x="311" y="396" width="12" height="12" fill="#c5c9ce"/><rect x="323" y="396" width="12" height="12" fill="#c8ced5"/><rect x="335" y="396" width="12" height="12" fill="#b8bdbf"/><rect x="347" y="396" width="12" height="12" fill="#b5bcc0"/><rect x="359" y="396" width="12" height="12" fill="#c5cacd"/><rect x="371" y="396" width="12" height="12" fill="#b7bfc6"/><rect x="203" y="432" width="12" height="12" fill="#bec6ce"/><rect x="215" y="432" width="12" height="12" fill="#c3c9cf"/><rect x="227" y="432" width="12" height="12" fill="#bdc3ca"/><rect x="239" y="432" width="12" height="12" fill="#c4cad0"/><rect x="251" y="432" width="12" height="12" fill="#c6ccd2"/><rect x="263" y="432" width="12" height="12" fill="#c5cbd1"/><rect x="275" y="432" width="12" height="12" fill="#b5bec5"/><rect x="287" y="432" width="12" height="12" fill="#c4c9cc"/><rect x="299" y="432" width="12" height="12" fill="#c3c8cc"/><rect x="311" y="432" width="12" height="12" fill="#c7cfd6"/><rect x="203" y="468" width="12" height="12" fill="#c2ccd4"/><rect x="215" y="468" width="12" height="12" fill="#c2c7cf"/><rect x="227" y="468" width="12" height="12" fill="#bdc5cd"/><rect x="239" y="468" width="12" height="12" fill="#cfd7dd"/><rect x="251" y="468" width="12" height="12" fill="#cfd8df"/><rect x="263" y="468" width="12" height="12" fill="#bcc3cb"/><rect x="275" y="468" width="12" height="12" fill="#c5cbd2"/><rect x="287" y="468" width="12" height="12" fill="#bfc4cb"/><rect x="203" y="504" width="12" height="12" fill="#b8c0ca"/><rect x="215" y="504" width="12" height="12" fill="#c0c5cc"/><rect x="227" y="504" width="12" height="12" fill="#c3c8ce"/><rect x="239" y="504" width="12" height="12" fill="#bcc2cc"/><rect x="251" y="504" width="12" height="12" fill="#c6cdd4"/><rect x="263" y="504" width="12" height="12" fill="#cbd0d6"/><rect x="275" y="504" width="12" height="12" fill="#b9bec6"/><rect x="287" y="504" width="12" height="12" fill="#c0c6ce"/><rect x="299" y="504" width="12" height="12" fill="#c5c9cf"/><rect x="311" y="504" width="12" height="12" fill="#b9bfc7"/><rect x="203" y="540" width="12" height="12" fill="#b5c1ca"/><rect x="215" y="540" width="12" height="12" fill="#c1c7ce"/><rect x="227" y="540" width="12" height="12" fill="#b7c0c8"/><rect x="239" y="540" width="12" height="12" fill="#cacfd6"/><rect x="251" y="540" width="12" height="12" fill="#c9d0d8"/><rect x="263" y="540" width="12" height="12" fill="#bec6ce"/><rect x="275" y="540" width="12" height="12" fill="#c6c8cc"/><rect x="287" y="540" width="12" height="12" fill="#bcc4cd"/><rect x="299" y="540" width="12" height="12" fill="#c7ced6"/><rect x="203" y="564" width="12" height="12" fill="#d6dadc"/><rect x="215" y="564" width="12" height="12" fill="#cfd3d6"/><rect x="227" y="564" width="12" height="12" fill="#cdd1d5"/><rect x="239" y="564" width="12" height="12" fill="#dcdee1"/><rect x="251" y="564" width="12" height="12" fill="#dbdde0"/><rect x="263" y="564" width="12" height="12" fill="#d7dadd"/><rect x="275" y="564" width="12" height="12" fill="#dcdddf"/><rect x="287" y="564" width="12" height="12" fill="#ccd0d4"/><rect x="299" y="564" width="12" height="12" fill="#d5d6d9"/><rect x="203" y="576" width="12" height="12" fill="#b3bfc8"/><rect x="215" y="576" width="12" height="12" fill="#c0c8cf"/><rect x="227" y="576" width="12" height="12" fill="#b4bec6"/><rect x="239" y="576" width="12" height="12" fill="#c9ced6"/><rect x="251" y="576" width="12" height="12" fill="#c8d0d8"/><rect x="263" y="576" width="12" height="12" fill="#bfc7cf"/><rect x="275" y="576" width="12" height="12" fill="#c6c8cc"/><rect x="287" y="576" width="12" height="12" fill="#bdc6d0"/><rect x="299" y="576" width="12" height="12" fill="#c7ced6"/><rect x="203" y="600" width="12" height="12" fill="#cdd2d4"/><rect x="215" y="600" width="12" height="12" fill="#cbcccd"/><rect x="227" y="600" width="12" height="12" fill="#cdd0d2"/><rect x="239" y="600" width="12" height="12" fill="#d8d9da"/><rect x="251" y="600" width="12" height="12" fill="#d8d9da"/><rect x="263" y="600" width="12" height="12" fill="#d5d6d8"/><rect x="275" y="600" width="12" height="12" fill="#d6d6d6"/><rect x="287" y="600" width="12" height="12" fill="#cdd0d3"/><rect x="299" y="600" width="12" height="12" fill="#d3d4d6"/><rect x="203" y="612" width="12" height="12" fill="#b5c0c9"/><rect x="215" y="612" width="12" height="12" fill="#c2c8ce"/><rect x="227" y="612" width="12" height="12" fill="#b5bfc7"/><rect x="239" y="612" width="12" height="12" fill="#c8ced5"/><rect x="251" y="612" width="12" height="12" fill="#c9d0d7"/><rect x="263" y="612" width="12" height="12" fill="#bec6cd"/><rect x="275" y="612" width="12" height="12" fill="#c6c9cc"/><rect x="287" y="612" width="12" height="12" fill="#c0c8d0"/><rect x="299" y="612" width="12" height="12" fill="#c6cdd4"/><rect x="203" y="636" width="12" height="12" fill="#cdd2d4"/><rect x="215" y="636" width="12" height="12" fill="#cbcccd"/><rect x="227" y="636" width="12" height="12" fill="#cdd0d2"/><rect x="239" y="636" width="12" height="12" fill="#d8d9da"/><rect x="251" y="636" width="12" height="12" fill="#d8d9da"/><rect x="263" y="636" width="12" height="12" fill="#d5d6d8"/><rect x="275" y="636" width="12" height="12" fill="#d6d6d6"/><rect x="287" y="636" width="12" height="12" fill="#cdd0d3"/><rect x="299" y="636" width="12" height="12" fill="#d3d4d6"/><rect x="203" y="648" width="12" height="12" fill="#b5c0c9"/><rect x="215" y="648" width="12" height="12" fill="#c2c8ce"/><rect x="227" y="648" width="12" height="12" fill="#b5bfc7"/><rect x="239" y="648" width="12" height="12" fill="#c8ced5"/><rect x="251" y="648" width="12" height="12" fill="#c9d0d7"/><rect x="263" y="648" width="12" height="12" fill="#bec6cd"/><rect x="275" y="648" width="12" height="12" fill="#c6c9cc"/><rect x="287" y="648" width="12" height="12" fill="#c0c8d0"/><rect x="299" y="648" width="12" height="12" fill="#c6cdd4"/></svg>
<div class="a" style="left:16px;top:681px;width:1232px;height:2px;background:#a8a8a8"></div>
<div class="a" style="left:16px;top:683px;width:1232px;height:19.5px;background:#eef6fd;border-bottom:1px solid #dcdfe3"></div>
<div class="a" style="left:16px;top:702.5px;width:1232px;height:19px;background:#f8f9fa;border-bottom:1px solid #dcdfe3"></div>
<div class="a" style="left:81.5px;top:683px;width:1px;height:38px;background:#dcdfe3"></div>
<div class="a" style="left:133.0px;top:683px;width:1px;height:38px;background:#dcdfe3"></div>
<div class="a" style="left:194.0px;top:683px;width:1px;height:38px;background:#dcdfe3"></div>
<div class="a" style="left:564.5px;top:683px;width:1px;height:38px;background:#dcdfe3"></div>
<div class="a" style="left:639.0px;top:683px;width:1px;height:38px;background:#dcdfe3"></div>
<div class="a" style="left:767.2px;top:683px;width:1px;height:38px;background:#dcdfe3"></div>
<div class="a" style="left:818.3px;top:683px;width:1px;height:38px;background:#dcdfe3"></div>
<div class="a" style="left:909.0px;top:683px;width:1px;height:38px;background:#dcdfe3"></div>
<div class="a" style="left:985.9px;top:683px;width:1px;height:38px;background:#dcdfe3"></div>
<div class="a" style="left:1148.1px;top:683px;width:1px;height:38px;background:#dcdfe3"></div>
<div class="a" style="left:1235.8px;top:683px;width:1px;height:38px;background:#dcdfe3"></div>
<div class="a" style="left:20px;top:685px;font-size:12.5px;letter-spacing:-0.3px;line-height:18px;font-weight:bold;color:#111">Total</div>
<div class="a" style="left:20px;top:704px;font-size:12.5px;letter-spacing:-0.65px;line-height:18px;font-weight:bold;color:#f0922a">Sélection</div>
<div class="a" style="left:767px;top:685px;width:50px;text-align:right;font-size:12.5px;letter-spacing:-0.4px;line-height:18px;font-weight:bold;color:#111">0,00</div>
<div class="a" style="left:767px;top:704px;width:50px;text-align:right;font-size:12.5px;letter-spacing:-0.4px;line-height:18px;font-weight:bold;color:#f0922a">0,00</div>
<div class="a" style="left:1090px;top:685px;width:56px;text-align:right;font-size:12.5px;letter-spacing:-0.4px;line-height:18px;font-weight:bold;color:#111">0,00</div>
<div class="a" style="left:1090px;top:704px;width:56px;text-align:right;font-size:12.5px;letter-spacing:-0.4px;line-height:18px;font-weight:bold;color:#f0922a">0,00</div>
<div class="a" style="left:16px;top:722px;width:1249px;height:17px;background:#f0f0f0"></div>
<div class="a" style="left:33px;top:729px;width:619px;height:2.6px;border-radius:1.5px;background:#8a8a8a"></div>
<div class="a" style="left:1248px;top:251px;width:17px;height:470px;background:#f0f0f0"></div>
<div class="a" style="left:1255px;top:269px;width:2px;height:355px;background:#8a8a8a"></div>
<div class="a" style="left:565px;top:248px;width:263px;height:437px;border:2px solid #ff0000;box-shadow:2px 2px 3px rgba(0,0,0,0.28), inset 2px 2px 3px rgba(0,0,0,0.28)"></div>
</body></html>
